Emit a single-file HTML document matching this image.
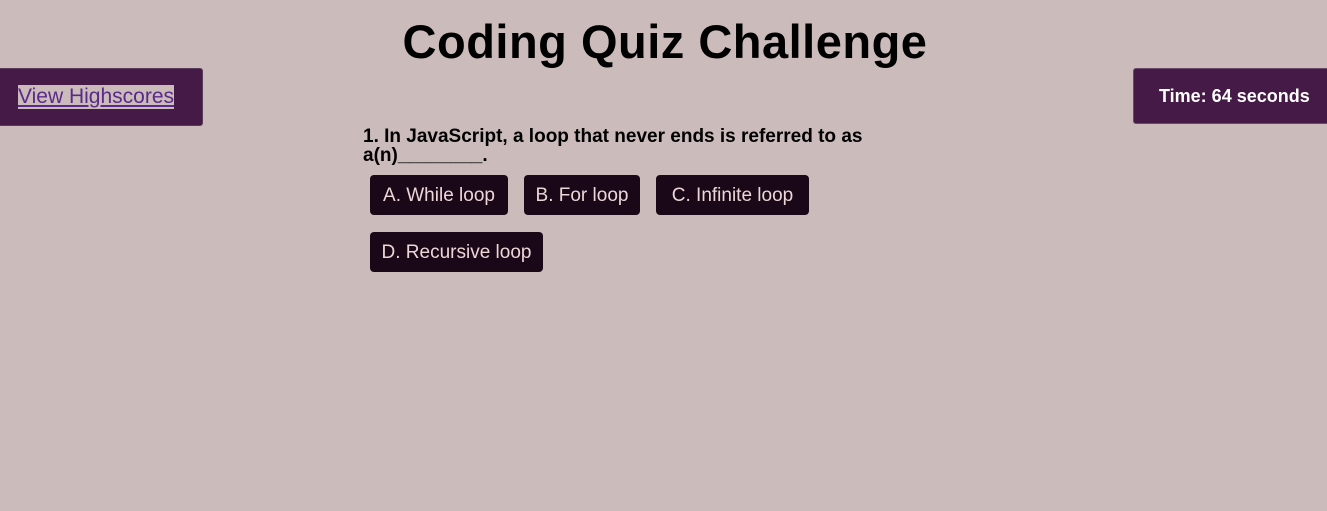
<!DOCTYPE html>
<html><head><style>
body{margin:0;width:1327px;height:511px;background:#cbbbbb;font-family:"Liberation Sans",sans-serif;position:relative;overflow:hidden}
h1{position:absolute;left:0;width:1330px;top:14px;margin:0;text-align:center;font-size:47px;font-weight:bold;color:#000;letter-spacing:0.5px}
.hs{position:absolute;left:-4px;top:68px;width:207px;height:58px;background:#461a46;border:1px solid #5a3a5a;border-radius:3px;box-sizing:border-box}
.hs a{position:absolute;left:21px;top:16px;font-size:21px;color:#5a2a8a;background:#cbbbbb;text-decoration:underline;line-height:24px}
.tm{position:absolute;left:1133px;top:68px;width:200px;height:56px;background:#461a46;border:1px solid #6a4a6a;border-radius:3px;box-sizing:border-box;color:#fff;font-size:18px;font-weight:bold;padding:17px 0 0 25px}
.q{position:absolute;left:363px;top:127px;width:560px;font-size:19px;font-weight:bold;line-height:19px;color:#000}
.b{position:absolute;height:40px;background:#1a0818;color:#ecd6d6;border-radius:4px;font-size:19px;line-height:42px;text-align:center}
</style></head><body>
<h1>Coding Quiz Challenge</h1>
<div class="hs"><a>View Highscores</a></div>
<div class="tm">Time: 64 seconds</div>
<div class="q">1. In JavaScript, a loop that never ends is referred to as a(n)________.</div>
<div class="b" style="left:370px;top:175px;width:138px">A. While loop</div>
<div class="b" style="left:524px;top:175px;width:116px">B. For loop</div>
<div class="b" style="left:656px;top:175px;width:153px">C. Infinite loop</div>
<div class="b" style="left:370px;top:232px;width:173px">D. Recursive loop</div>
</body></html>
